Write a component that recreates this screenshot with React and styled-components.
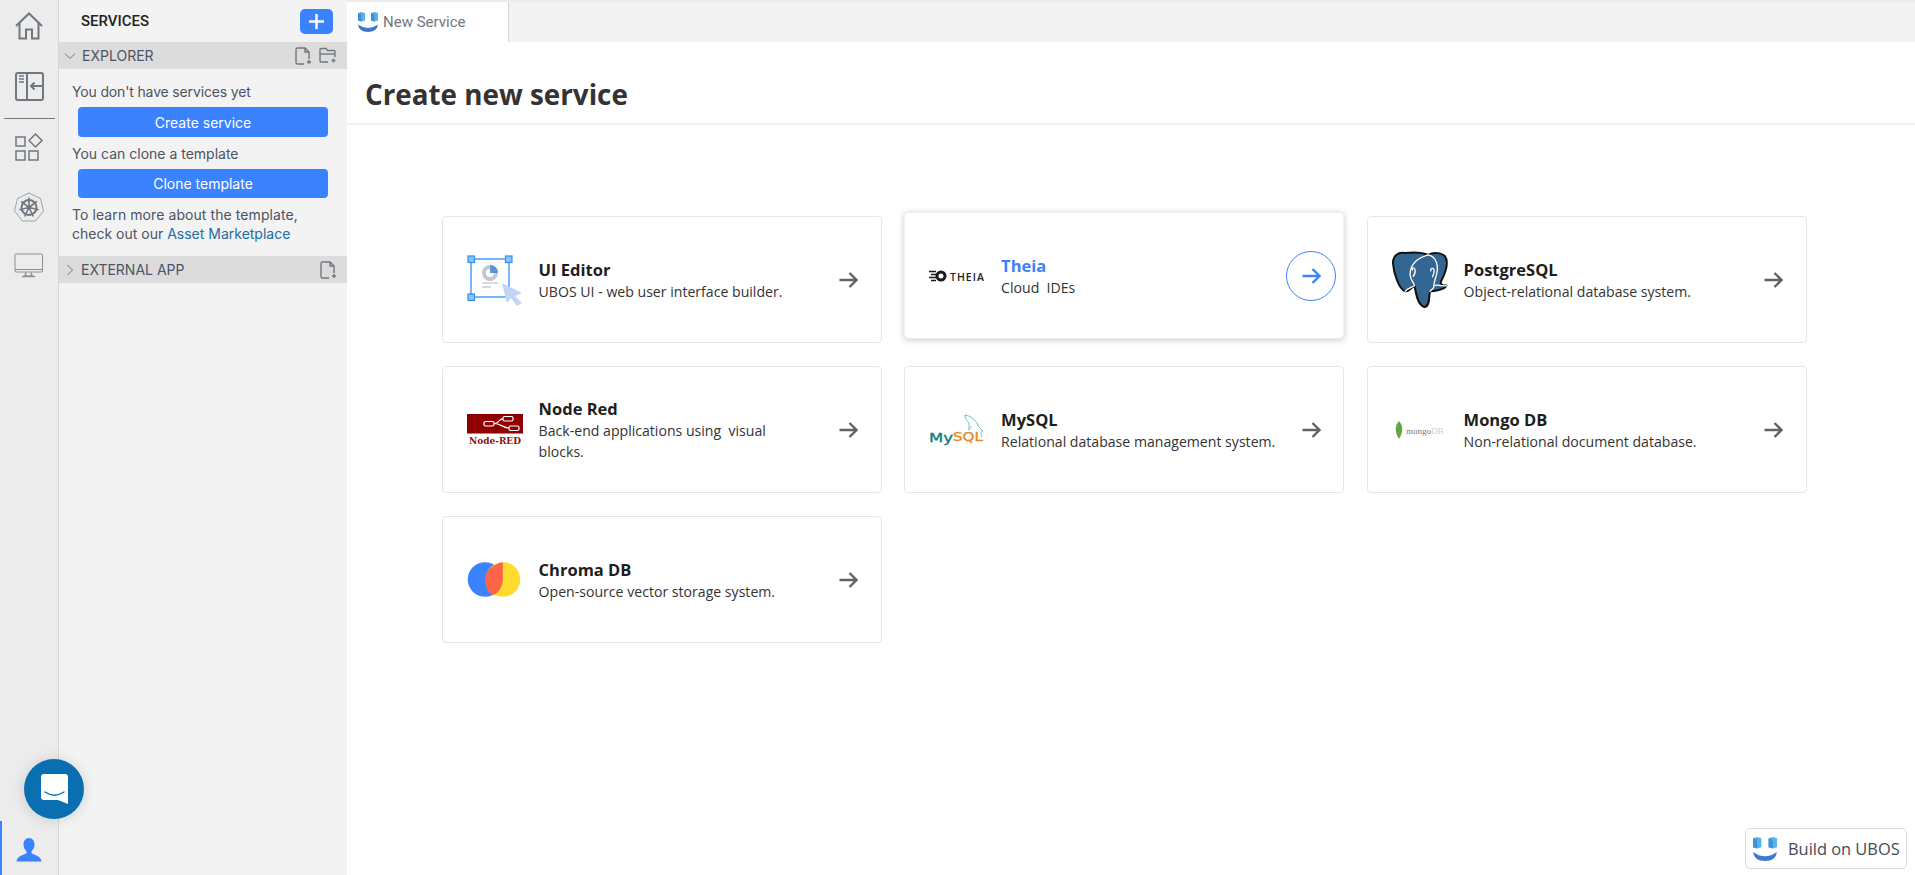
import React from "react";
import styled, { createGlobalStyle } from "styled-components";

const GlobalStyle = createGlobalStyle`
  * { box-sizing: border-box; }
  html, body { margin: 0; padding: 0; height: 100%; overflow: hidden; background: #fff; }
  #root { height: 100%; }
`;

const BLUE = "#3b82ff";

const Layout = styled.div`
  display: flex;
  height: 100vh;
  font-family: Inter, "Liberation Sans", sans-serif;
`;

const Rail = styled.nav`
  width: 59px;
  flex: none;
  display: flex;
  flex-direction: column;
  align-items: center;
  background: #ececec;
  border-right: 1px solid #d6d6d6;
  padding-top: 12px;
`;

const RailIcon = styled.div`
  width: 58px;
  height: ${(p) => p.$h}px;
  display: flex;
  justify-content: center;
  color: #6f7780;
`;

const RailLine = styled.div`
  width: 51px;
  height: 1px;
  background: #6f7780;
  margin-bottom: 14px;
`;

const UserTab = styled.div`
  margin-top: auto;
  width: 58px;
  height: 54px;
  border-left: 2px solid ${BLUE};
  color: ${BLUE};
  display: flex;
  align-items: center;
  justify-content: center;
  padding: 2px 3px 0 0;
`;

const Panel = styled.aside`
  width: 288px;
  flex: none;
  background: #f3f3f3;
`;

const PanelHead = styled.div`
  height: 42px;
  display: flex;
  align-items: center;
  justify-content: space-between;
  padding: 0 14px 0 22px;
`;

const PanelTitle = styled.h2`
  margin: 0;
  font: 500 15px Roboto, sans-serif;
  color: #222;
`;

const AddButton = styled.button`
  width: 33px;
  height: 25px;
  border: 0;
  border-radius: 5px;
  background: ${BLUE};
  padding: 0;
  display: flex;
  align-items: center;
  justify-content: center;
`;

const SectionBar = styled.div`
  height: 27px;
  background: #dcdcdc;
  display: flex;
  align-items: center;
  padding: 0 10px 0 5px;
  color: #4b5563;
  font-size: 14px;
`;

const SectionName = styled.span`
  margin-left: ${(p) => p.$indent}px;
  flex: 1;
`;

const BarIcons = styled.div`
  display: flex;
  gap: 7px;
  color: #6f7780;
`;

const Explorer = styled.div`
  padding: 13px 12px 13px 13px;
  color: #4b5563;
  font-size: 14px;
  line-height: 19px;
`;

const Hint = styled.p`
  margin: 0;
  letter-spacing: ${(p) => p.$track || 0}px;
`;

const MarketLink = styled.a`
  color: #1c6ea4;
`;

const WideButton = styled.button`
  display: block;
  width: 250px;
  height: ${(p) => p.$h}px;
  margin: 6px 0 7px 6px;
  border: 0;
  border-radius: 4px;
  background: ${BLUE};
  color: #fff;
  font: 400 14px Inter, sans-serif;
`;

const Main = styled.main`
  flex: 1;
  min-width: 0;
  display: flex;
  flex-direction: column;
  background: #fff;
`;

const TabBar = styled.div`
  height: 42px;
  background: #f3f3f3;
  border-top: 2px solid #ececec;
  display: flex;
`;

const Tab = styled.div`
  width: 162px;
  background: #fff;
  border-right: 1px solid #d6d6d6;
  display: flex;
  align-items: center;
  gap: 5px;
  padding-left: 11px;
  font: 400 15px Roboto, sans-serif;
  color: #6f7780;
`;

const PageHead = styled.header`
  height: 83px;
  border-bottom: 2px solid #f0f0f0;
  padding: 33px 0 0 18px;
`;

const PageTitle = styled.h1`
  margin: 0;
  font: 700 27.8px/38px "Open Sans", sans-serif;
  color: #333;
`;

const Grid = styled.div`
  display: grid;
  grid-template-columns: repeat(3, 440px);
  grid-auto-rows: 127px;
  column-gap: 22.5px;
  row-gap: 23px;
  padding: 91px 0 0 94.6px;
`;

const Card = styled.div`
  display: flex;
  align-items: center;
  background: #fff;
  border: 1px solid #e6e6ea;
  border-radius: 4px;
  padding: 0 7px 0 24px;
  ${(p) =>
    p.$active &&
    `
    transform: translateY(-4px);
    border-color: #eee;
    box-shadow: 0 1px 6px rgba(0, 0, 0, 0.22);
  `}
`;

const Logo = styled.div`
  width: 56px;
  flex: none;
  display: flex;
  justify-content: center;
  align-items: center;
`;

const CardBody = styled.div`
  flex: 1;
  margin-left: 16px;
  min-width: 0;
  padding-top: 1px;
  font-family: "Open Sans", sans-serif;
`;

const CardTitle = styled.h3`
  margin: 0;
  font-size: 16.5px;
  line-height: 22px;
  font-weight: 700;
  color: ${(p) => (p.$active ? BLUE : "#1e1e1e")};
`;

const CardText = styled.p`
  margin: 0;
  font-size: 14.1px;
  line-height: 21px;
  color: #333;
  max-width: ${(p) => (p.$wide ? "none" : "260px")};
  white-space: pre-wrap;
`;

const ArrowBox = styled.div`
  width: 50px;
  height: 50px;
  flex: none;
  border-radius: 50%;
  display: flex;
  align-items: center;
  justify-content: center;
  margin-left: 8px;
  color: ${(p) => (p.$active ? BLUE : "#5f6368")};
  border: 1px solid ${(p) => (p.$active ? BLUE : "transparent")};
`;

const ChatBubble = styled.div`
  position: fixed;
  left: 24px;
  top: 759px;
  width: 60px;
  height: 60px;
  border-radius: 50%;
  background: #0a6fb0;
  box-shadow: 0 1px 14px rgba(0, 0, 0, 0.14);
  display: flex;
  align-items: center;
  justify-content: center;
`;

const BuildBadge = styled.div`
  position: fixed;
  left: 1745px;
  top: 828px;
  width: 162px;
  height: 41px;
  background: #fff;
  border: 1px solid #d5dbe3;
  border-radius: 5px;
  display: flex;
  align-items: center;
  gap: 11px;
  padding-left: 7px;
  font: 400 16.4px "Open Sans", sans-serif;
  color: #444b55;
  white-space: nowrap;
`;

const line = { fill: "none", stroke: "currentColor", strokeWidth: 2 };
const thin = { fill: "none", stroke: "currentColor", strokeWidth: 1.4 };

const HomeIcon = () => (
  <svg width="28" height="28" viewBox="0 0 28 28" {...line}>
    <path d="M1 14 14 1.5 27 14" />
    <path d="M4.5 11V26.5H11V17.5H17V26.5H23.5V11" />
  </svg>
);

const PanelIcon = () => (
  <svg width="30" height="30" viewBox="0 0 30 30" {...line}>
    <rect x="2" y="2" width="27" height="27" rx="2" />
    <path d="M13 2V29" />
    <path d="M5 5H10M5 8H10M5 11H10" strokeWidth="1.4" />
    <path d="M28 15H17M20.5 11.5 17 15l3.5 3.5" />
  </svg>
);

const AppsIcon = () => (
  <svg width="29" height="28" viewBox="0 0 29 28" {...line} strokeWidth="1.5">
    <rect x="1" y="4" width="9" height="9" />
    <rect x="1" y="18" width="9" height="9" />
    <rect x="14" y="18" width="9" height="9" />
    <path d="M20.5 1 27 7.5 20.5 14 14 7.5Z" />
  </svg>
);

const spokes = [0, 51.4, 102.8, 154.3, 205.7, 257.1, 308.6];

const ClusterIcon = () => (
  <svg width="32" height="31" viewBox="0 0 32 31">
    <path d="M16 1 27.5 6.5 30.5 19 22.5 29H9.5L1.5 19 4.5 6.5Z" fill="none" stroke="#8a9098" strokeWidth="0.8" />
    <circle cx="16" cy="15.5" r="7.5" fill="none" stroke="#6f7780" strokeWidth="2" />
    {spokes.map((a) => (
      <path key={a} d="M16 15.5V5.5" stroke="#6f7780" strokeWidth="1.6" transform={`rotate(${a} 16 15.5)`} />
    ))}
    <circle cx="16" cy="15.5" r="2.2" fill="#6f7780" />
  </svg>
);

const MonitorIcon = () => (
  <svg width="30" height="25" viewBox="0 0 30 25" fill="none" stroke="#8a9098" strokeWidth="1">
    <rect x="1" y="1" width="27.5" height="18" rx="1" />
    <path d="M1 16.5H28.5" />
    <path d="M12 19.5 11 23H18L17 19.5M8 23.5H21" strokeWidth="1.5" />
  </svg>
);

const UserIcon = () => (
  <svg width="26" height="25" viewBox="0 0 26 25" fill="currentColor">
    <path d="M13 1c3.5 0 5.5 3 5.5 6.5 0 3-1.5 5.5-3 6.8v2c2 1.5 9.5 2.5 10 8.2H.5c.5-5.7 8-6.7 10-8.200v-2C9 13 7.5 10.5 7.5 7.5 7.5 4 9.5 1 13 1Z" />
  </svg>
);

const FileAdd = () => (
  <svg width="17" height="18" viewBox="0 0 17 18" {...thin}>
    <path d="M9 17H2.5A1.5 1.5 0 0 1 1 15.5V2.5A1.5 1.5 0 0 1 2.5 1H10l4 4v7" />
    <path d="M10 1v4h4" />
    <path d="M14 13v4M12 15h4" />
  </svg>
);

const FolderAdd = () => (
  <svg width="18" height="18" viewBox="0 0 18 18" {...thin}>
    <path d="M9 15H2a1 1 0 0 1-1-1V2.5a1 1 0 0 1 1-1h5l1.5 2H15a1 1 0 0 1 1 1V10" />
    <path d="M1 7H16" />
    <path d="M14.5 11.5v4M12.5 13.5h4" />
  </svg>
);

const Chevron = ({ open }) => (
  <svg width="12" height="12" viewBox="0 0 12 12" fill="none" stroke="#6f7780" strokeWidth="1">
    <path d={open ? "M1 3.5 6 8.5 11 3.5" : "M3.5 1 8.5 6 3.5 11"} />
  </svg>
);

const ArrowIcon = () => (
  <svg width="19" height="16" viewBox="0 0 19 16" fill="none" stroke="currentColor" strokeWidth="2.4">
    <path d="M.5 8H17M10.5 1 17.5 8 10.5 15" />
  </svg>
);

const UbosMark = ({ size }) => (
  <svg width={size} height={size} viewBox="0 0 20 20">
    <path d="M0 1 3.5 0 7 1V8.5L3.5 9.5 0 8.5Z" fill="#5ab2ec" />
    <path d="M3.5 2V9.5L0 8.5V1Z" fill="#3f92d8" />
    <path d="M13 1 16.5 0 20 1V8.5L16.5 9.5 13 8.5Z" fill="#5ab2ec" />
    <path d="M16.5 2V9.5L13 8.5V1Z" fill="#3f92d8" />
    <path d="M0 12.5Q1 20 10 20T20 12.5Q15 16 10 16T0 12.5Z" fill="#3f78d0" />
  </svg>
);

const EditorLogo = () => (
  <svg width="56" height="52" viewBox="0 0 56 52">
    <rect x="4" y="5" width="38" height="38" fill="none" stroke="#2f8ff5" strokeWidth="1.3" />
    {[[4, 5], [41.5, 5], [4, 43]].map(([x, y]) => (
      <rect key={x + "-" + y} x={x - 3} y={y - 3} width="6.5" height="6.5" fill="#8fc0fa" stroke="#2f8ff5" strokeWidth="1.2" />
    ))}
    <circle cx="23" cy="19" r="6" fill="none" stroke="#c2c7d0" strokeWidth="4" />
    <path d="M23 11a8 8 0 0 1 8 8h-8Z" fill="#5d93cf" />
    <path d="M15 29H31" stroke="#c2c7d0" strokeWidth="1.3" />
    <path d="M15 33H24" stroke="#c2c7d0" strokeWidth="1.3" />
    <path d="M35 29 55 39 48 42 55 49 50 52 44 44 40 49Z" fill="#c0d5f8" />
  </svg>
);

const TheiaLogo = () => (
  <svg width="56" height="14" viewBox="0 0 56 14">
    <path d="M0 2.5H7M2 5.5H7M0 8.5H7M2 11.5H7" stroke="#1a1a1a" strokeWidth="1.5" />
    <circle cx="12" cy="7" r="4" fill="none" stroke="#1a1a1a" strokeWidth="3" />
    <text x="21" y="11.5" fontFamily="Open Sans, sans-serif" fontWeight="600" fontSize="10.5" letterSpacing="1" fill="#222">THEIA</text>
  </svg>
);

const PostgresLogo = () => (
  <svg width="56" height="58" viewBox="0 0 170 176">
    <path
      d="M40 6C18 2 2 15 3 38c2 27 17 77 37 84 10 3 18-10 28-17 4 15 8 60 30 65 17 0 14-30 17-48 10 0 45-4 50-17-15 0-20-5-15-15C165 60 172 30 160 15 150 5 125 3 110 12 95 5 65 3 40 6Z"
      fill="#336791"
      stroke="#111"
      strokeWidth="6"
      strokeLinejoin="round"
    />
    <g fill="none" stroke="#fff" strokeWidth="4" strokeLinecap="round">
      <path d="M110 12c-25 8-55 20-55 60 0 15 10 20 13 33" />
      <path d="M40 122c10-10 25-14 28-17" />
      <path d="M110 12c25 5 35 35 22 70-4 12-5 20-6 30l-11 10" />
      <path d="M62 58c-3-10 7-8 8-1 1 8-1 15-6 20" />
      <path d="M118 60c-2-9 8-10 10-2 1 8-2 14-5 20" />
      <path d="M165 105c-15 3-30-5-35 0" />
    </g>
  </svg>
);

const NodeRedLogo = () => (
  <svg width="56" height="32" viewBox="0 0 56 32">
    <rect width="56" height="19.5" fill="#8f0000" />
    <g fill="none" stroke="#fff" strokeWidth="1.2">
      <rect x="17" y="7.5" width="10" height="4.5" rx="1.5" />
      <rect x="36" y="2.5" width="10" height="4.5" rx="1.5" />
      <rect x="42" y="12" width="10" height="4.5" rx="1.5" />
      <path d="M27 9.5C33 9.5 31 4.8 36 4.8M27 9.5C34 9.5 36 14 42 14" />
    </g>
    <text x="2" y="30" textLength="52" lengthAdjust="spacingAndGlyphs" fontFamily="DejaVu Serif, serif" fontWeight="700" fontSize="9" fill="#8f1010">Node-RED</text>
  </svg>
);

const MysqlLogo = () => (
  <svg width="56" height="32" viewBox="0 0 56 32">
    <path d="M36 1C42 2 47 6 50 13l4 4c-2 0-3 2-1 6M36 1c0 4 2 6 4 8v7c1-2 2-3 3-4" fill="none" stroke="#5fa8a8" strokeWidth=".8" />
    <text x="0" y="28" textLength="24" lengthAdjust="spacingAndGlyphs" fontFamily="DejaVu Sans, sans-serif" fontSize="13" stroke="#0f7f80" strokeWidth=".4" fill="#0f7f80">My</text>
    <text x="24" y="27" textLength="30" lengthAdjust="spacingAndGlyphs" fontFamily="DejaVu Sans, sans-serif" fontSize="12.5" stroke="#e98a2a" strokeWidth=".4" fill="#e98a2a">SQL</text>
  </svg>
);

const MongoLogo = () => (
  <svg width="56" height="20" viewBox="0 0 56 20">
    <path d="M7 1C11 5 11.5 12 7.3 18.5H6.7C2.5 12 3 5 7 1Z" fill="#5fa73f" />
    <text x="14" y="13.5" fontFamily="Liberation Serif, serif" fontSize="9" fill="#7a7a7a">mongo<tspan fill="#cfcfcf">DB</tspan></text>
  </svg>
);

const ChromaLogo = () => (
  <svg width="56" height="35" viewBox="0 0 56 35">
    <circle cx="18" cy="17.5" r="17.3" fill={BLUE} />
    <circle cx="36" cy="17.5" r="17.3" fill="#ffdc2e" />
    <path d="M35.8 .2C27 2 18.2 8 18.2 17.5 18.2 24 21 31 26 33 32 31 35.8 24 35.8 17.5Z" fill="#ff6446" />
  </svg>
);

const services = [
  { name: "UI Editor", text: "UBOS UI - web user interface builder.", logo: <EditorLogo /> },
  { name: "Theia", text: "Cloud  IDEs", logo: <TheiaLogo />, active: true },
  { name: "PostgreSQL", text: "Object-relational database system.", logo: <PostgresLogo /> },
  { name: "Node Red", text: "Back-end applications using  visual blocks.", logo: <NodeRedLogo /> },
  { name: "MySQL", text: "Relational database management system.", logo: <MysqlLogo />, wide: true },
  { name: "Mongo DB", text: "Non-relational document database.", logo: <MongoLogo /> },
  { name: "Chroma DB", text: "Open-source vector storage system.", logo: <ChromaLogo /> },
];

const App = () => {
  return (
    <Layout>
      <GlobalStyle />
      <Rail>
        <RailIcon $h={59}><HomeIcon /></RailIcon>
        <RailIcon $h={47}><PanelIcon /></RailIcon>
        <RailLine />
        <RailIcon $h={59}><AppsIcon /></RailIcon>
        <RailIcon $h={61}><ClusterIcon /></RailIcon>
        <RailIcon $h={40}><MonitorIcon /></RailIcon>
        <UserTab><UserIcon /></UserTab>
      </Rail>
      <Panel>
        <PanelHead>
          <PanelTitle>SERVICES</PanelTitle>
          <AddButton aria-label="Add service">
            <svg width="15" height="15" viewBox="0 0 15 15" stroke="#fff" strokeWidth="2.4">
              <path d="M7.5 0V15M0 7.5H15" />
            </svg>
          </AddButton>
        </PanelHead>
        <SectionBar>
          <Chevron open />
          <SectionName $indent={6}>EXPLORER</SectionName>
          <BarIcons><FileAdd /><FolderAdd /></BarIcons>
        </SectionBar>
        <Explorer>
          <Hint $track={-0.15}>You don't have services yet</Hint>
          <WideButton $h={30}>Create service</WideButton>
          <Hint>You can clone a template</Hint>
          <WideButton $h={29}>Clone template</WideButton>
          <Hint $track={0.08}>To learn more about the template,</Hint>
          <Hint>check out our <MarketLink>Asset Marketplace</MarketLink></Hint>
        </Explorer>
        <SectionBar>
          <Chevron />
          <SectionName $indent={5}>EXTERNAL APP</SectionName>
          <BarIcons><FileAdd /></BarIcons>
        </SectionBar>
      </Panel>
      <Main>
        <TabBar>
          <Tab><UbosMark size={20} />New Service</Tab>
        </TabBar>
        <PageHead>
          <PageTitle>Create new service</PageTitle>
        </PageHead>
        <Grid>
          {services.map((s) => (
            <Card key={s.name} $active={s.active}>
              <Logo>{s.logo}</Logo>
              <CardBody>
                <CardTitle $active={s.active}>{s.name}</CardTitle>
                <CardText $wide={s.wide}>{s.text}</CardText>
              </CardBody>
              <ArrowBox $active={s.active}><ArrowIcon /></ArrowBox>
            </Card>
          ))}
        </Grid>
      </Main>
      <ChatBubble>
        <svg width="27" height="30" viewBox="0 0 27 30">
          <path d="M3 0H24a3 3 0 0 1 3 3V30L17 26H3a3 3 0 0 1-3-3V3A3 3 0 0 1 3 0Z" fill="#fff" />
          <path d="M4 18C10 22 17 22 23 18" fill="none" stroke="#0a6fb0" strokeWidth="1.4" strokeLinecap="round" />
        </svg>
      </ChatBubble>
      <BuildBadge><UbosMark size={24} />Build on UBOS</BuildBadge>
    </Layout>
  );
};

export default App;
